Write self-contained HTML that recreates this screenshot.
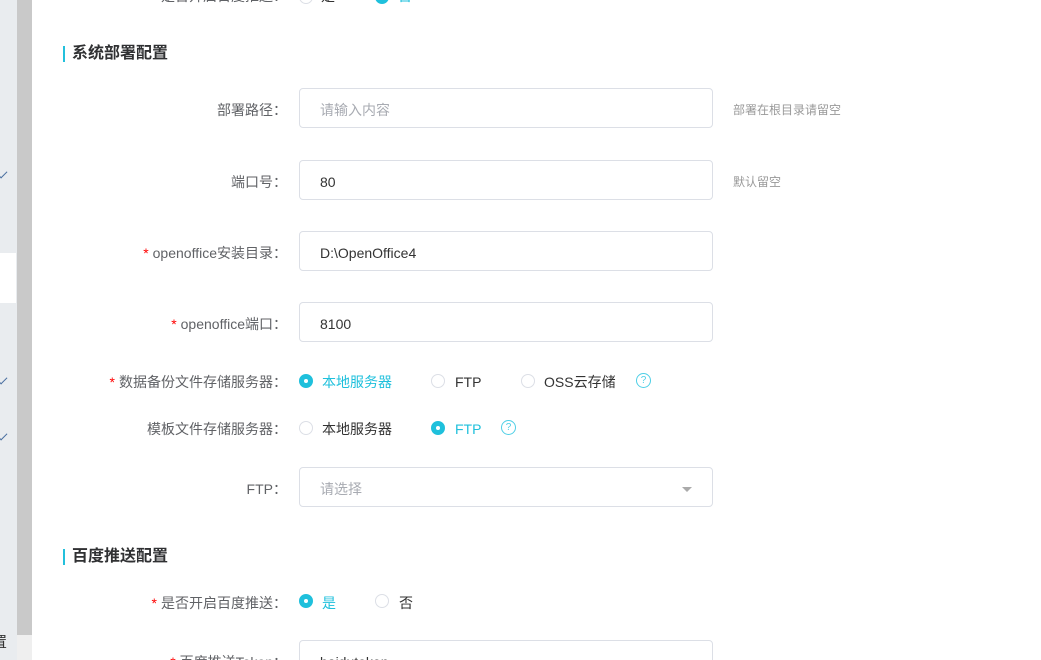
<!DOCTYPE html><html><head><meta charset="utf-8"><style>
html,body{margin:0;width:1041px;height:660px;overflow:hidden}
body{background:#fff;font-family:"Liberation Sans","Noto Sans CJK SC",sans-serif;font-size:14px;color:#606266;position:relative}
.a{position:absolute;white-space:nowrap}
.lbl{position:absolute;right:754px;line-height:20px;white-space:nowrap}
.lbl i{font-style:normal;font-family:"Noto Sans CJK SC",sans-serif}
.lbl b{color:#f00;font-weight:normal;margin-right:4px}
.inp{position:absolute;left:299px;height:38px;border:1px solid #dcdfe6;border-radius:4px;line-height:42px;padding-left:20px;box-sizing:content-box;color:#333;width:392px}
.ph{color:#a8abb2}
.h{position:absolute;left:63px;font-size:16px;font-weight:bold;color:#303133;padding-left:7px;border-left:2px solid #23c0dc;height:16px;line-height:16px}
.r{position:absolute;width:14px;height:14px;border:1px solid #dcdfe6;border-radius:50%;box-sizing:border-box}
.r.on{background:#1fc0dc;border-color:#1fc0dc}
.r.on:after{content:"";position:absolute;left:4px;top:4px;width:4px;height:4px;background:#fff;border-radius:50%}
.t{position:absolute;line-height:20px;color:#333}
.t.on{color:#1fc0dc}
.q{position:absolute;width:13px;height:13px;border:1px solid #4fcfe6;border-radius:50%;color:#4fcfe6;font-size:10px;line-height:13px;text-align:center}
.hint{position:absolute;left:733px;font-size:12px;color:#999;line-height:20px}
.ck{position:absolute;left:-2px;width:8px;height:4px;border-left:1.5px solid #4a6fa0;border-bottom:1.5px solid #4a6fa0;transform:rotate(-45deg)}
</style></head><body>
<div class="a" style="left:0;top:0;width:17px;height:660px;background:#e9ecef"></div>
<div class="a" style="left:0;top:253px;width:16px;height:50px;background:#fff"></div>
<div class="a" style="left:17px;top:0;width:15px;height:635px;background:#c9c9c9"></div>
<div class="a" style="left:17px;top:635px;width:15px;height:25px;background:#efefef"></div>
<div class="ck" style="top:171px"></div><div class="ck" style="top:377px"></div><div class="ck" style="top:433px"></div>
<div class="a" style="left:-8px;top:631px;font-size:15px;color:#333">置</div>

<div class="lbl" style="top:-14px">是否开启百度推送<i>：</i></div>
<div class="r" style="left:299px;top:-10px"></div><div class="t" style="left:321px;top:-14px">是</div>
<div class="r on" style="left:375px;top:-10px"></div><div class="t on" style="left:398px;top:-14px">否</div>

<div class="h" style="top:46px">系统部署配置</div>

<div class="lbl" style="top:100px">部署路径<i>：</i></div>
<div class="inp ph" style="top:88px">请输入内容</div>
<div class="hint" style="top:100px">部署在根目录请留空</div>

<div class="lbl" style="top:172px">端口号<i>：</i></div>
<div class="inp" style="top:160px">80</div>
<div class="hint" style="top:172px">默认留空</div>

<div class="lbl" style="top:243px"><b>*</b>openoffice安装目录<i>：</i></div>
<div class="inp" style="top:231px">D:\OpenOffice4</div>

<div class="lbl" style="top:314px"><b>*</b>openoffice端口<i>：</i></div>
<div class="inp" style="top:302px">8100</div>

<div class="lbl" style="top:372px"><b>*</b>数据备份文件存储服务器<i>：</i></div>
<div class="r on" style="left:299px;top:374px"></div><div class="t on" style="left:322px;top:372px">本地服务器</div>
<div class="r" style="left:431px;top:374px"></div><div class="t" style="left:455px;top:372px">FTP</div>
<div class="r" style="left:521px;top:374px"></div><div class="t" style="left:544px;top:372px">OSS云存储</div>
<div class="q" style="left:636px;top:373px">?</div>

<div class="lbl" style="top:419px">模板文件存储服务器<i>：</i></div>
<div class="r" style="left:299px;top:421px"></div><div class="t" style="left:322px;top:419px">本地服务器</div>
<div class="r on" style="left:431px;top:421px"></div><div class="t on" style="left:455px;top:419px">FTP</div>
<div class="q" style="left:501px;top:420px">?</div>

<div class="lbl" style="top:479px">FTP<i>：</i></div>
<div class="inp ph" style="top:467px">请选择</div>
<div class="a" style="left:682px;top:487px;width:0;height:0;border-left:5px solid transparent;border-right:5px solid transparent;border-top:5px solid #aaa"></div>

<div class="h" style="top:549px">百度推送配置</div>

<div class="lbl" style="top:593px"><b>*</b>是否开启百度推送<i>：</i></div>
<div class="r on" style="left:299px;top:594px"></div><div class="t on" style="left:322px;top:593px">是</div>
<div class="r" style="left:375px;top:594px"></div><div class="t" style="left:399px;top:593px">否</div>

<div class="lbl" style="top:652px"><b>*</b>百度推送Token<i>：</i></div>
<div class="inp" style="top:640px">baidutoken</div>
</body></html>
